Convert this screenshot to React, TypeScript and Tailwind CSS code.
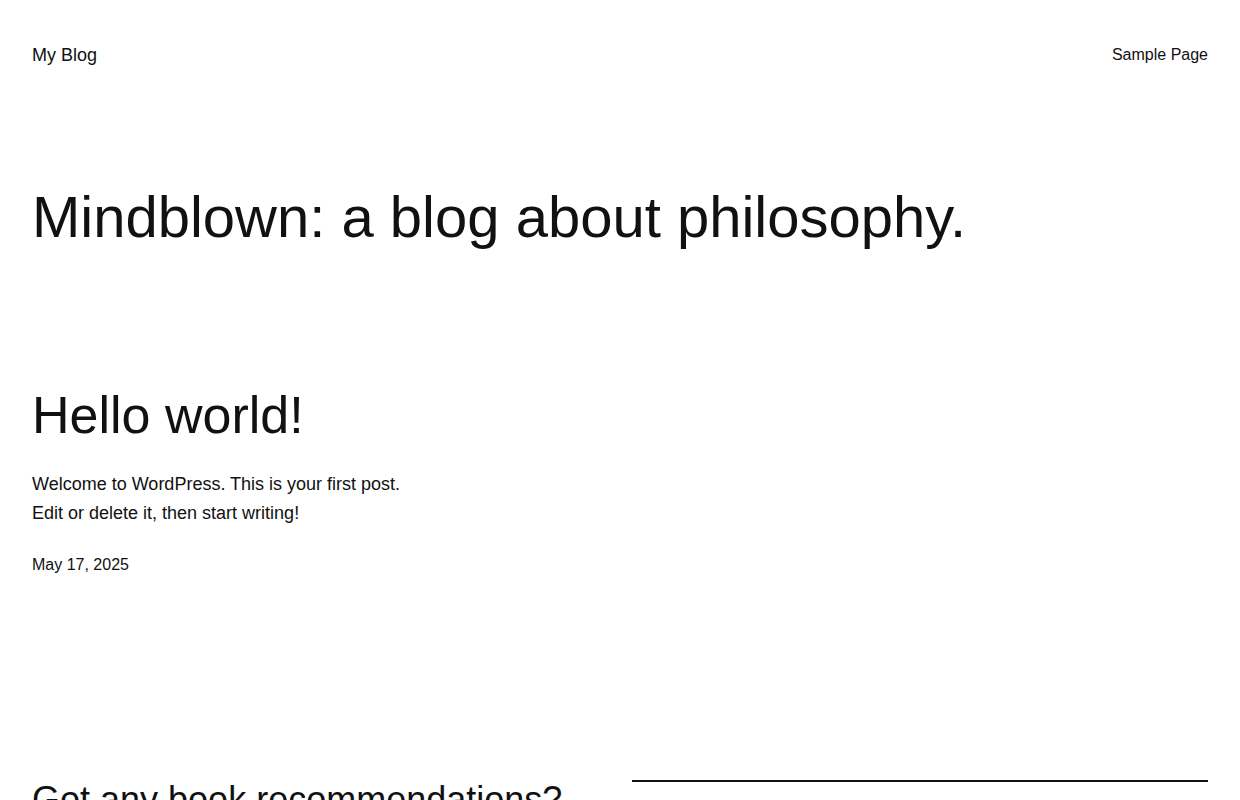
import React from 'react';

const FONT = { fontFamily: '"Liberation Sans", Arial, sans-serif' };

const posts = [
  {
    title: 'Hello world!',
    excerpt: 'Welcome to WordPress. This is your first post. Edit or delete it, then start writing!',
    date: 'May 17, 2025',
  },
];

export default function App() {
  return (
    <div className="min-h-screen bg-white text-[#111111]" style={FONT}>
      <header className="flex h-[109px] items-center justify-between px-8">
        <a href="#" className="pt-[1px] text-[18px] leading-[1.6]">
          My Blog
        </a>
        <nav>
          <a href="#" className="text-[16px] leading-[1.6]">
            Sample Page
          </a>
        </nav>
      </header>

      <main className="px-8">
        <h1 className="mt-[73px] text-[58px] leading-[1.2] font-normal">
          Mindblown: a blog about philosophy.
        </h1>

        <section className="mt-[132px] grid grid-cols-3 gap-6">
          {posts.map((post) => (
            <article key={post.title}>
              <h2 className="text-[52px] leading-[1.2] font-normal">{post.title}</h2>
              <p className="mt-[24.5px] text-[18px] leading-[1.6]">{post.excerpt}</p>
              <div className="mt-[23.7px] text-[16px] leading-[1.6]">{post.date}</div>
            </article>
          ))}
        </section>

        <section className="mt-[201px] grid grid-cols-2 gap-6 pb-16">
          <div>
            <h2 className="text-[36px] leading-[1.2] font-normal">Got any book recommendations?</h2>
            <p className="mt-6 text-[18px] leading-[1.6]">Get in touch</p>
          </div>
          <div className="mt-[2px] border-t-2 border-[#111111] pt-6">
            <p className="text-[18px] leading-[1.6]">
              Send us a note with the titles that changed the way you think.
            </p>
          </div>
        </section>
      </main>
    </div>
  );
}
